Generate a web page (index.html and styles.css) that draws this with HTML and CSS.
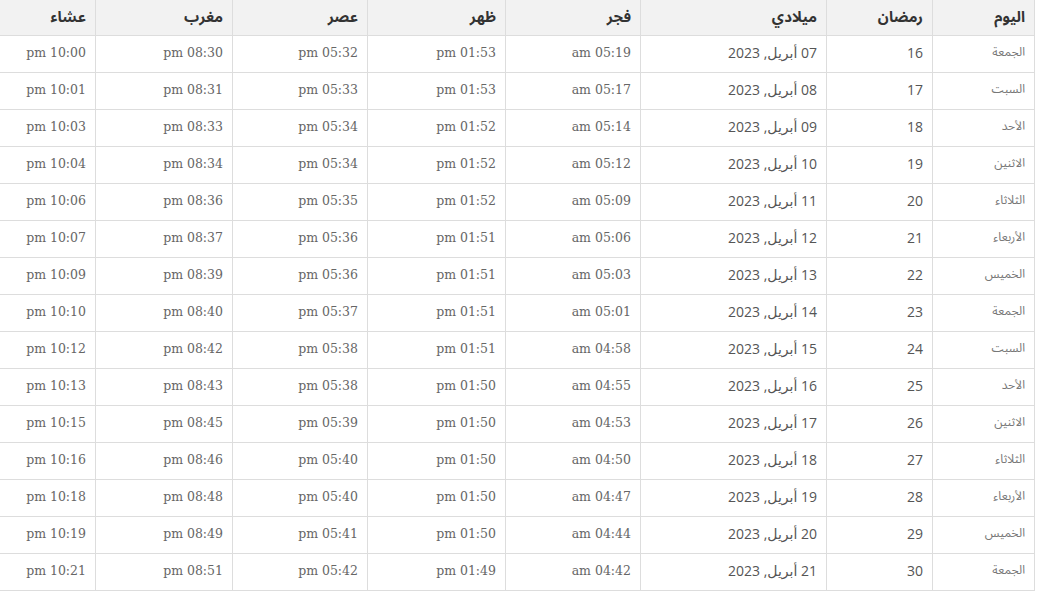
FILE: index.html
```html
<!DOCTYPE html>
<html lang="ar" dir="rtl">
<head>
<meta charset="utf-8">
<title>إمساكية رمضان</title>
<link rel="stylesheet" href="styles.css">
</head>
<body>
<div class="wrap">
<table class="times">
<colgroup>
<col class="c-day"><col class="c-ram"><col class="c-date"><col class="c-t1"><col class="c-t2"><col class="c-t3"><col class="c-t4"><col class="c-t5">
</colgroup>
<thead>
<tr><th>اليوم</th><th>رمضان</th><th>ميلادي</th><th>فجر</th><th>ظهر</th><th>عصر</th><th>مغرب</th><th>عشاء</th></tr>
</thead>
<tbody>
<tr><td class="day">الجمعة</td><td class="num">16</td><td class="num">07 أبريل, 2023</td><td class="tm">05:19 am</td><td class="tm">01:53 pm</td><td class="tm">05:32 pm</td><td class="tm">08:30 pm</td><td class="tm">10:00 pm</td></tr>
<tr><td class="day">السبت</td><td class="num">17</td><td class="num">08 أبريل, 2023</td><td class="tm">05:17 am</td><td class="tm">01:53 pm</td><td class="tm">05:33 pm</td><td class="tm">08:31 pm</td><td class="tm">10:01 pm</td></tr>
<tr><td class="day">الأحد</td><td class="num">18</td><td class="num">09 أبريل, 2023</td><td class="tm">05:14 am</td><td class="tm">01:52 pm</td><td class="tm">05:34 pm</td><td class="tm">08:33 pm</td><td class="tm">10:03 pm</td></tr>
<tr><td class="day">الاثنين</td><td class="num">19</td><td class="num">10 أبريل, 2023</td><td class="tm">05:12 am</td><td class="tm">01:52 pm</td><td class="tm">05:34 pm</td><td class="tm">08:34 pm</td><td class="tm">10:04 pm</td></tr>
<tr><td class="day">الثلاثاء</td><td class="num">20</td><td class="num">11 أبريل, 2023</td><td class="tm">05:09 am</td><td class="tm">01:52 pm</td><td class="tm">05:35 pm</td><td class="tm">08:36 pm</td><td class="tm">10:06 pm</td></tr>
<tr><td class="day">الأربعاء</td><td class="num">21</td><td class="num">12 أبريل, 2023</td><td class="tm">05:06 am</td><td class="tm">01:51 pm</td><td class="tm">05:36 pm</td><td class="tm">08:37 pm</td><td class="tm">10:07 pm</td></tr>
<tr><td class="day">الخميس</td><td class="num">22</td><td class="num">13 أبريل, 2023</td><td class="tm">05:03 am</td><td class="tm">01:51 pm</td><td class="tm">05:36 pm</td><td class="tm">08:39 pm</td><td class="tm">10:09 pm</td></tr>
<tr><td class="day">الجمعة</td><td class="num">23</td><td class="num">14 أبريل, 2023</td><td class="tm">05:01 am</td><td class="tm">01:51 pm</td><td class="tm">05:37 pm</td><td class="tm">08:40 pm</td><td class="tm">10:10 pm</td></tr>
<tr><td class="day">السبت</td><td class="num">24</td><td class="num">15 أبريل, 2023</td><td class="tm">04:58 am</td><td class="tm">01:51 pm</td><td class="tm">05:38 pm</td><td class="tm">08:42 pm</td><td class="tm">10:12 pm</td></tr>
<tr><td class="day">الأحد</td><td class="num">25</td><td class="num">16 أبريل, 2023</td><td class="tm">04:55 am</td><td class="tm">01:50 pm</td><td class="tm">05:38 pm</td><td class="tm">08:43 pm</td><td class="tm">10:13 pm</td></tr>
<tr><td class="day">الاثنين</td><td class="num">26</td><td class="num">17 أبريل, 2023</td><td class="tm">04:53 am</td><td class="tm">01:50 pm</td><td class="tm">05:39 pm</td><td class="tm">08:45 pm</td><td class="tm">10:15 pm</td></tr>
<tr><td class="day">الثلاثاء</td><td class="num">27</td><td class="num">18 أبريل, 2023</td><td class="tm">04:50 am</td><td class="tm">01:50 pm</td><td class="tm">05:40 pm</td><td class="tm">08:46 pm</td><td class="tm">10:16 pm</td></tr>
<tr><td class="day">الأربعاء</td><td class="num">28</td><td class="num">19 أبريل, 2023</td><td class="tm">04:47 am</td><td class="tm">01:50 pm</td><td class="tm">05:40 pm</td><td class="tm">08:48 pm</td><td class="tm">10:18 pm</td></tr>
<tr><td class="day">الخميس</td><td class="num">29</td><td class="num">20 أبريل, 2023</td><td class="tm">04:44 am</td><td class="tm">01:50 pm</td><td class="tm">05:41 pm</td><td class="tm">08:49 pm</td><td class="tm">10:19 pm</td></tr>
<tr><td class="day">الجمعة</td><td class="num">30</td><td class="num">21 أبريل, 2023</td><td class="tm">04:42 am</td><td class="tm">01:49 pm</td><td class="tm">05:42 pm</td><td class="tm">08:51 pm</td><td class="tm">10:21 pm</td></tr>
</tbody>
</table>
</div>
</body>
</html>
```

FILE: styles.css
```css
html, body {
  margin: 0;
  padding: 0;
  background: #ffffff;
}
.wrap {
  padding-right: 9px;
}
.times {
  border-collapse: collapse;
  table-layout: fixed;
  width: 1035px;
  font-family: "Noto Sans Arabic", "DejaVu Sans", sans-serif;
  color: #555;
}
.c-day { width: 102px; }
.c-ram { width: 106px; }
.c-date { width: 186px; }
.c-t1 { width: 135px; }
.c-t2 { width: 138px; }
.c-t3 { width: 135px; }
.c-t4 { width: 137px; }
.c-t5 { width: 96px; }
.times th,
.times td {
  border: 1px solid #dddddd;
  text-align: right;
  padding: 0 9px;
  white-space: nowrap;
}
.times tr > :last-child {
  border-left: none;
}
.times thead th {
  border-top: none;
  height: 34px;
  padding-bottom: 1px;
  background: #f2f2f2;
  color: #333;
  font-size: 15px;
  font-weight: bold;
}
.times tbody td {
  height: 33px;
  padding-bottom: 3px;
}
.day {
  font-size: 12px;
  color: #777;
}
.num {
  font-family: "Open Sans", "DejaVu Sans", sans-serif;
  font-size: 14px;
  color: #555;
}
.tm {
  font-family: "DejaVu Serif", "Liberation Serif", serif;
  font-size: 12.5px;
  color: #666;
}
```
